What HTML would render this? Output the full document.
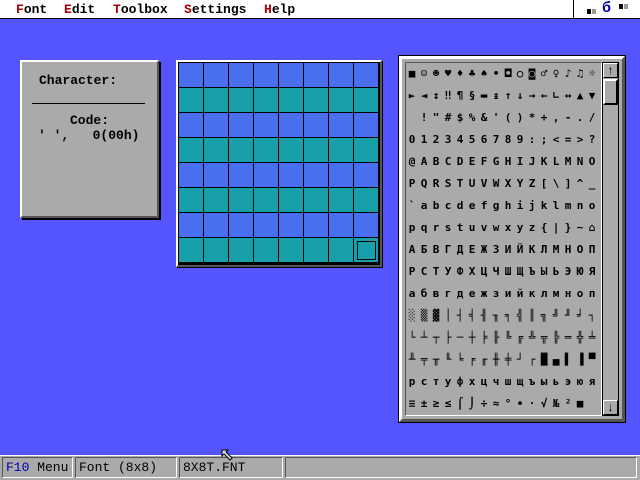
<!DOCTYPE html>
<html><head><style>
*{margin:0;padding:0;box-sizing:border-box}
body{width:640px;height:480px;background:#5555ff;position:relative;overflow:hidden;font-family:"Liberation Mono","DejaVu Sans Mono",monospace}
.abs{position:absolute}
#menu{left:0;top:0;width:640px;height:19px;background:#fff;border-bottom:1px solid #000;font:bold 13px "Liberation Mono",monospace;}
#menu span{position:absolute;top:2px;color:#000}
#menu b{color:#aa0000}
.panel{background:#aaa;border:2px solid;border-color:#fff #555 #555 #fff;box-shadow:2px 2px 0 #000}
.cm{position:absolute;left:406px;top:63px;font:bold 11px "DejaVu Sans Mono","Liberation Mono",monospace;color:#000}
.cm div{height:22px;line-height:22px;white-space:pre}
.cm span{display:inline-block;width:12px;text-align:center}
.seg{position:absolute;top:457px;height:21px;background:#aaa;border:1px solid;border-color:#555 #fff #fff #555;font:13px "Liberation Mono",monospace;line-height:19px;padding-left:3px;white-space:nowrap;overflow:hidden}
</style></head><body>
<div id="menu">
<span style="left:16px"><b>F</b>ont</span>
<span style="left:64px"><b>E</b>dit</span>
<span style="left:113px"><b>T</b>oolbox</span>
<span style="left:184px"><b>S</b>ettings</span>
<span style="left:264px"><b>H</b>elp</span>
<div class="abs" style="left:573px;top:0;width:1px;height:19px;background:#000"></div>
<div class="abs" style="left:587px;top:9px;width:4px;height:5px;background:#000"></div>
<div class="abs" style="left:592px;top:9px;width:4px;height:5px;background:#999"></div>
<div class="abs" style="left:619px;top:4px;width:4px;height:5px;background:#000"></div>
<div class="abs" style="left:624px;top:4px;width:4px;height:5px;background:#999"></div>
<span style="left:602px;top:0;color:#0000aa;font-size:15px">б</span>
</div>

<div class="abs panel" style="left:20px;top:60px;width:139px;height:158px;font:bold 13px 'Liberation Mono',monospace">
<div class="abs" style="left:17px;top:11px">Character:</div>
<div class="abs" style="left:10px;top:41px;width:113px;height:1px;background:#000"></div>
<div class="abs" style="left:48px;top:51px">Code:</div>
<div class="abs" style="left:16px;top:66px;white-space:pre">' ',   0(00h)</div>
</div>

<div class="abs" style="left:176px;top:60px;width:206px;height:207px;background:#000;border:2px solid;border-color:#fff #555 #555 #fff;box-shadow:1px 1px 0 #000">
<div class="abs" style="left:1px;top:1px;width:200px;height:200px;background:repeating-linear-gradient(#4a6ef0 0 24px,#000 24px 25px,#17a0aa 25px 49px,#000 49px 50px)"></div>
<div class="abs" style="left:1px;top:1px;width:200px;height:200px;background:repeating-linear-gradient(90deg,transparent 0 24px,#000 24px 25px)"></div>
<div class="abs" style="left:179px;top:179px;width:19px;height:19px;border:1px solid #000"></div>
</div>

<div class="abs panel" style="left:399px;top:56px;width:226px;height:366px;box-shadow:none;border-width:3px;outline:1px solid #000">
<div class="abs" style="left:3px;top:3px;width:197px;height:354px;border:1px solid;border-color:#555 #fff #fff #555"></div>
<div class="abs" style="left:200px;top:3px;width:17px;height:354px;background:#aaa;border:1px solid #000"></div>
<div class="abs" style="left:201px;top:4px;width:15px;height:15px;background:#aaa;border:1px solid;border-color:#fff #000 #000 #fff;font:bold 12px sans-serif;text-align:center;line-height:13px">↑</div>
<div class="abs" style="left:201px;top:20px;width:15px;height:26px;background:#aaa;border:2px solid;border-color:#fff #000 #000 #fff"></div>
<div class="abs" style="left:201px;top:341px;width:15px;height:15px;background:#aaa;border:1px solid;border-color:#fff #000 #000 #fff;font:bold 12px sans-serif;text-align:center;line-height:13px">↓</div>
</div>

<div class="cm">
<div><span>■</span><span>☺</span><span>☻</span><span>♥</span><span>♦</span><span>♣</span><span>♠</span><span>•</span><span>◘</span><span>○</span><span>◙</span><span>♂</span><span>♀</span><span>♪</span><span>♫</span><span>☼</span></div>
<div><span>►</span><span>◄</span><span>↕</span><span>‼</span><span>¶</span><span>§</span><span>▬</span><span>↨</span><span>↑</span><span>↓</span><span>→</span><span>←</span><span>∟</span><span>↔</span><span>▲</span><span>▼</span></div>
<div><span> </span><span>!</span><span>"</span><span>#</span><span>$</span><span>%</span><span>&amp;</span><span>'</span><span>(</span><span>)</span><span>*</span><span>+</span><span>,</span><span>-</span><span>.</span><span>/</span></div>
<div><span>0</span><span>1</span><span>2</span><span>3</span><span>4</span><span>5</span><span>6</span><span>7</span><span>8</span><span>9</span><span>:</span><span>;</span><span>&lt;</span><span>=</span><span>&gt;</span><span>?</span></div>
<div><span>@</span><span>A</span><span>B</span><span>C</span><span>D</span><span>E</span><span>F</span><span>G</span><span>H</span><span>I</span><span>J</span><span>K</span><span>L</span><span>M</span><span>N</span><span>O</span></div>
<div><span>P</span><span>Q</span><span>R</span><span>S</span><span>T</span><span>U</span><span>V</span><span>W</span><span>X</span><span>Y</span><span>Z</span><span>[</span><span>\</span><span>]</span><span>^</span><span>_</span></div>
<div><span>`</span><span>a</span><span>b</span><span>c</span><span>d</span><span>e</span><span>f</span><span>g</span><span>h</span><span>i</span><span>j</span><span>k</span><span>l</span><span>m</span><span>n</span><span>o</span></div>
<div><span>p</span><span>q</span><span>r</span><span>s</span><span>t</span><span>u</span><span>v</span><span>w</span><span>x</span><span>y</span><span>z</span><span>{</span><span>|</span><span>}</span><span>~</span><span>⌂</span></div>
<div><span>А</span><span>Б</span><span>В</span><span>Г</span><span>Д</span><span>Е</span><span>Ж</span><span>З</span><span>И</span><span>Й</span><span>К</span><span>Л</span><span>М</span><span>Н</span><span>О</span><span>П</span></div>
<div><span>Р</span><span>С</span><span>Т</span><span>У</span><span>Ф</span><span>Х</span><span>Ц</span><span>Ч</span><span>Ш</span><span>Щ</span><span>Ъ</span><span>Ы</span><span>Ь</span><span>Э</span><span>Ю</span><span>Я</span></div>
<div><span>а</span><span>б</span><span>в</span><span>г</span><span>д</span><span>е</span><span>ж</span><span>з</span><span>и</span><span>й</span><span>к</span><span>л</span><span>м</span><span>н</span><span>о</span><span>п</span></div>
<div><span>░</span><span>▒</span><span>▓</span><span>│</span><span>┤</span><span>╡</span><span>╢</span><span>╖</span><span>╕</span><span>╣</span><span>║</span><span>╗</span><span>╝</span><span>╜</span><span>╛</span><span>┐</span></div>
<div><span>└</span><span>┴</span><span>┬</span><span>├</span><span>─</span><span>┼</span><span>╞</span><span>╟</span><span>╚</span><span>╔</span><span>╩</span><span>╦</span><span>╠</span><span>═</span><span>╬</span><span>╧</span></div>
<div><span>╨</span><span>╤</span><span>╥</span><span>╙</span><span>╘</span><span>╒</span><span>╓</span><span>╫</span><span>╪</span><span>┘</span><span>┌</span><span>█</span><span>▄</span><span>▌</span><span>▐</span><span>▀</span></div>
<div><span>р</span><span>с</span><span>т</span><span>у</span><span>ф</span><span>х</span><span>ц</span><span>ч</span><span>ш</span><span>щ</span><span>ъ</span><span>ы</span><span>ь</span><span>э</span><span>ю</span><span>я</span></div>
<div><span>≡</span><span>±</span><span>≥</span><span>≤</span><span>⌠</span><span>⌡</span><span>÷</span><span>≈</span><span>°</span><span>∙</span><span>·</span><span>√</span><span>№</span><span>²</span><span>■</span><span> </span></div>
</div>

<div class="abs" style="left:0;top:455px;width:640px;height:25px;background:#aaa;border-top:1px solid #fff"></div>
<div class="seg" style="left:2px;width:71px"><span style="color:#0000aa">F10</span> Menu</div>
<div class="seg" style="left:75px;width:102px">Font (8x8)</div>
<div class="seg" style="left:179px;width:104px">8X8T.FNT</div>
<div class="seg" style="left:285px;width:352px"></div>

<svg class="abs" style="left:221px;top:449px" width="16" height="16" viewBox="0 0 16 16"><path d="M1 1 L7 1 L5 3 L11 9 L9 11 L3 5 L1 7 Z" fill="#ddd" stroke="#000" stroke-width="1"/></svg>
</body></html>
